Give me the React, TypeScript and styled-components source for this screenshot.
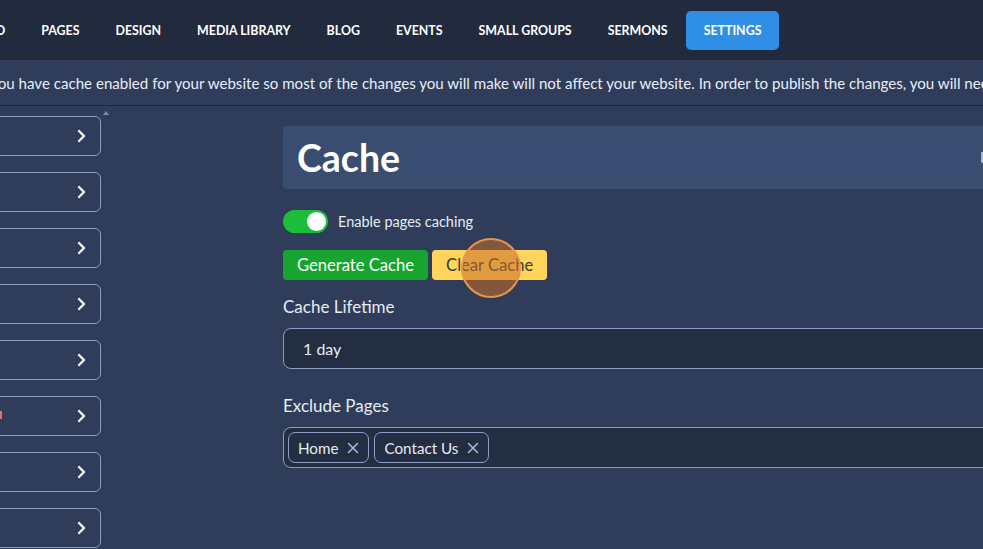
import React from "react";
import styled, { createGlobalStyle } from "styled-components";

const GlobalStyle = createGlobalStyle`
  html, body { margin: 0; padding: 0; }
  body {
    width: 983px;
    height: 549px;
    overflow: hidden;
    background: #2f3d5a;
    font-family: Lato, "Noto Sans", sans-serif;
    color: #e6ebf5;
  }
  * { box-sizing: border-box; }
`;

const Page = styled.div`
  width: 983px;
  height: 549px;
  overflow: hidden;
  display: flex;
  flex-direction: column;
`;

const NavBar = styled.nav`
  height: 60px;
  background: #222b3e;
  display: flex;
  align-items: center;
  margin-left: -43px;
  flex-shrink: 0;
`;

const NavItem = styled.a<{ $active?: boolean }>`
  display: flex;
  align-items: center;
  height: 39px;
  padding: 0 18px;
  border-radius: 5px;
  font-size: 12.4px;
  font-weight: 700;
  color: #ffffff;
  text-transform: uppercase;
  background: ${(p) => (p.$active ? "#2f8ee5" : "transparent")};
  white-space: nowrap;
`;

const Notice = styled.div`
  height: 46px;
  flex-shrink: 0;
  display: flex;
  align-items: center;
  border-bottom: 1px solid #1f2838;
  margin-left: -10px;
  font-size: 15.1px;
  color: #e8edf7;
  white-space: nowrap;
`;

const Body = styled.div`
  flex: 1;
  display: flex;
  min-height: 0;
`;

const Sidebar = styled.aside`
  width: 101px;
  flex-shrink: 0;
  display: flex;
  flex-direction: column;
  gap: 16px;
  padding-top: 10px;
`;

const SideItem = styled.div`
  width: 200px;
  height: 40px;
  margin-left: -99px;
  border: 1px solid #8d9cc0;
  border-radius: 6px;
  display: flex;
  align-items: center;
  padding-right: 13px;
  color: #ffffff;
`;

const SideMarker = styled.span`
  margin-left: 97px;
  width: 3px;
  height: 8px;
  margin-top: -2px;
  background: #e86a78;
`;

const SideChevron = styled.span`
  margin-left: auto;
  display: flex;
`;

const ScrollRail = styled.div`
  width: 10px;
  flex-shrink: 0;
  display: flex;
  justify-content: center;
  padding-top: 5px;
`;

const ScrollArrow = styled.div`
  width: 0;
  height: 0;
  border-left: 3px solid transparent;
  border-right: 3px solid transparent;
  border-bottom: 4px solid #7d8aa6;
`;

const Main = styled.main`
  margin-left: 172px;
  width: 724px;
  flex-shrink: 0;
  padding-top: 20px;
  display: flex;
  flex-direction: column;
`;

const HeaderCard = styled.div`
  height: 63px;
  background: #394d70;
  border-radius: 4px;
  display: flex;
  align-items: center;
  justify-content: space-between;
  padding: 0 14px;
`;

const Title = styled.h1`
  margin: 0;
  font-size: 37.5px;
  font-weight: 700;
  color: #ffffff;
`;

const HeaderAction = styled.span`
  width: 12px;
  height: 11px;
  margin-top: -1px;
  border-radius: 1px;
  background: #a9b8d6;
`;

const ToggleRow = styled.label`
  margin-top: 21px;
  display: flex;
  align-items: center;
  gap: 10px;
  font-size: 14.5px;
  color: #e6ebf5;
`;

const Switch = styled.span`
  width: 45px;
  height: 23px;
  border-radius: 12px;
  background: #1bbd3b;
  display: flex;
  align-items: center;
  justify-content: flex-end;
  padding: 2px;
`;

const Knob = styled.span`
  width: 19px;
  height: 19px;
  border-radius: 50%;
  background: #ffffff;
`;

const ButtonRow = styled.div`
  margin-top: 17px;
  display: flex;
  gap: 4px;
`;

const Button = styled.button<{ $variant: "green" | "yellow" }>`
  height: 30px;
  padding: 0 14px;
  border: none;
  border-radius: 4px;
  font-family: inherit;
  font-size: 16.6px;
  background: ${(p) => (p.$variant === "green" ? "#16a52f" : "#ffd55c")};
  color: ${(p) => (p.$variant === "green" ? "#ffffff" : "#3a3a3a")};
  position: relative;
`;

const Highlight = styled.span`
  position: absolute;
  left: 29px;
  top: -12px;
  width: 60px;
  height: 60px;
  border-radius: 50%;
  background: rgba(200, 110, 40, 0.55);
  border: 2px solid #e8964a;
  pointer-events: none;
`;

const FieldLabel = styled.div`
  margin-top: 15px;
  font-size: 17px;
  line-height: 24px;
  color: #e6ebf5;
`;

const InputBox = styled.div`
  margin-top: 9px;
  height: 41px;
  background: #232e43;
  border: 1px solid #8d9cc0;
  border-radius: 8px;
  display: flex;
  align-items: center;
  gap: 5px;
  padding: 0 4px;
  font-size: 16px;
  color: #e6ebf5;
`;

const SelectValue = styled.span`
  padding-left: 15px;
`;

const Spacer = styled.div<{ $h: number }>`
  height: ${(p) => p.$h}px;
`;

const Tag = styled.span`
  height: 31px;
  border: 1px solid #8d9cc0;
  border-radius: 7px;
  display: flex;
  align-items: center;
  gap: 9px;
  padding: 0 9px;
  font-size: 15.2px;
  color: #e6ebf5;
`;

const Chevron = () => (
  <svg width="10" height="14" viewBox="0 0 10 14" fill="none">
    <path d="M2 2l5 5-5 5" stroke="#fff" strokeWidth="2.4" strokeLinecap="round" strokeLinejoin="round" />
  </svg>
);

const Cross = () => (
  <svg width="12" height="12" viewBox="0 0 12 12" fill="none">
    <path d="M1.5 1.5l9 9M10.5 1.5l-9 9" stroke="#a9b6d3" strokeWidth="1.6" strokeLinecap="round" />
  </svg>
);

const navItems = ["INFO", "PAGES", "DESIGN", "MEDIA LIBRARY", "BLOG", "EVENTS", "SMALL GROUPS", "SERMONS"];

export default function App() {
  return (
    <Page>
      <GlobalStyle />
      <NavBar>
        {navItems.map((n) => (
          <NavItem key={n}>{n}</NavItem>
        ))}
        <NavItem $active>SETTINGS</NavItem>
      </NavBar>
      <Notice>
        You have cache enabled for your website so most of the changes you will make will not affect your website. In order to publish the changes, you will need to clear the cache.
      </Notice>
      <Body>
        <Sidebar>
          {Array.from({ length: 8 }).map((_, i) => (
            <SideItem key={i}>
              {i === 5 && <SideMarker />}
              <SideChevron>
                <Chevron />
              </SideChevron>
            </SideItem>
          ))}
        </Sidebar>
        <ScrollRail>
          <ScrollArrow />
        </ScrollRail>
        <Main>
          <HeaderCard>
            <Title>Cache</Title>
            <HeaderAction />
          </HeaderCard>
          <ToggleRow>
            <Switch>
              <Knob />
            </Switch>
            Enable pages caching
          </ToggleRow>
          <ButtonRow>
            <Button $variant="green">Generate Cache</Button>
            <Button $variant="yellow">
              Clear Cache
              <Highlight />
            </Button>
          </ButtonRow>
          <FieldLabel>Cache Lifetime</FieldLabel>
          <InputBox>
            <SelectValue>1 day</SelectValue>
          </InputBox>
          <Spacer $h={10} />
          <FieldLabel>Exclude Pages</FieldLabel>
          <InputBox>
            <Tag>
              Home <Cross />
            </Tag>
            <Tag>
              Contact Us <Cross />
            </Tag>
          </InputBox>
        </Main>
      </Body>
    </Page>
  );
}
